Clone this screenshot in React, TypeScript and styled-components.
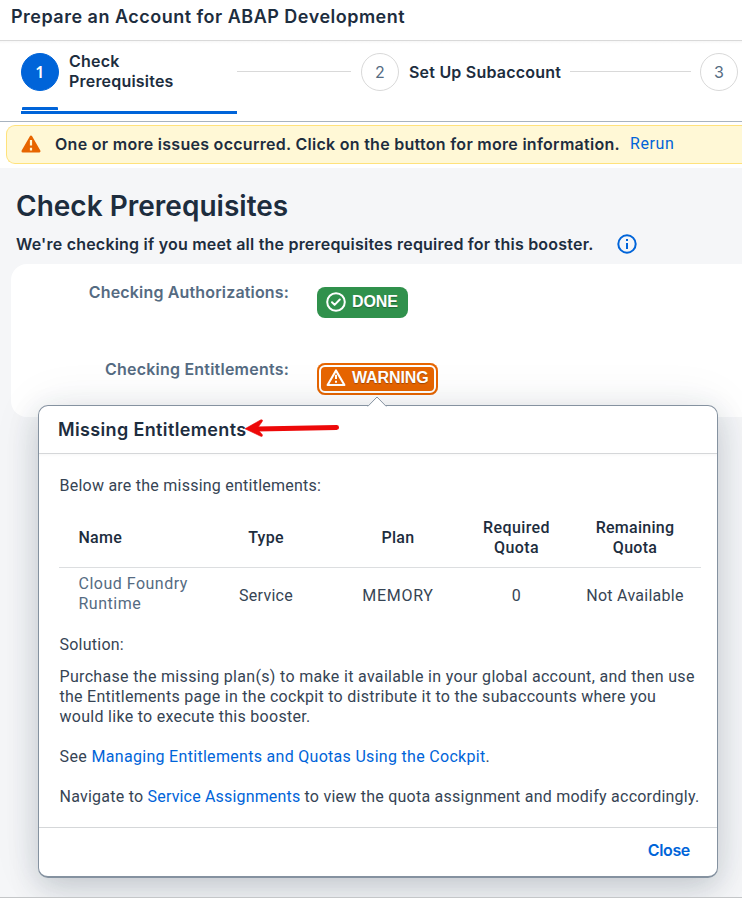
import React from "react";
import styled, { createGlobalStyle } from "styled-components";

const ink = "#1d2d3e";
const muted = "#556b82";
const blue = "#0064d9";

const GlobalStyle = createGlobalStyle`
  * { box-sizing: border-box; }
  html, body { margin: 0; padding: 0; overflow: hidden; }
  body {
    font: 400 16px/20px Roboto, sans-serif;
    letter-spacing: 0.24px;
    color: #364454;
  }
`;

const Page = styled.div`
  position: relative;
  width: 742px;
  height: 898px;
  display: flex;
  flex-direction: column;
  overflow: hidden;
  background: #f5f6f8;
  border-bottom: 1px solid #c4c6c8;
`;

const Strong = styled.span<{ $track?: number; $size?: number; $color?: string }>`
  font-family: Inter, sans-serif;
  font-weight: 600;
  font-size: ${(p) => p.$size ?? 16}px;
  letter-spacing: ${(p) => p.$track ?? 0.21}px;
  color: ${(p) => p.$color ?? ink};
  white-space: nowrap;
`;

const TitleBar = styled.header`
  flex: none;
  height: 41px;
  padding: 7px 0 0 11px;
  background: #fff;
  border-bottom: 1px solid #d9d9d9;
`;

const Steps = styled.nav`
  flex: none;
  height: 81px;
  display: flex;
  padding-left: 21px;
  background: linear-gradient(#f7f7f7, #fff 3px);
  border-bottom: 1px solid #a8b3bf;
  overflow: hidden;
`;

const Step = styled.div<{ $width: number; $active?: boolean }>`
  flex: none;
  width: ${(p) => p.$width}px;
  height: 73px;
  padding-top: 12px;
  border-bottom: 3px solid ${(p) => (p.$active ? blue : "transparent")};
`;

const StepContent = styled.div`
  display: flex;
  align-items: center;
  gap: 10px;
  height: 38px;
`;

const StepLabel = styled(Strong)<{ $lines?: number }>`
  padding-bottom: ${(p) => (p.$lines === 2 ? 2 : 0)}px;
`;

const StepNumber = styled.div<{ $active?: boolean }>`
  flex: none;
  width: 38px;
  height: 38px;
  border-radius: 50%;
  display: flex;
  align-items: center;
  justify-content: center;
  border: 1px solid ${(p) => (p.$active ? blue : "#d9d9d9")};
  background: ${(p) => (p.$active ? blue : "#fff")};
  color: ${(p) => (p.$active ? "#fff" : muted)};
  font: ${(p) => (p.$active ? 600 : 400)} 16px/20px ${(p) => (p.$active ? '"Noto Sans"' : "Inter")}, sans-serif;
`;

const StepMark = styled.div`
  width: 36px;
  height: 3px;
  margin: 16px 0 0 1px;
  background: ${blue};
  border-radius: 1px 1px 0 0;
`;

const Connector = styled.div<{ $width: number; $gap: number }>`
  flex: none;
  width: ${(p) => p.$width}px;
  height: 1px;
  margin: 30px ${(p) => p.$gap}px 0 0;
  background: #d9d9d9;
`;

const MessageArea = styled.div`
  flex: none;
  height: 46px;
  padding: 3px 0 0 6px;
  background: #fff;
`;

const MessageStrip = styled.div`
  height: 39px;
  display: flex;
  align-items: center;
  padding: 0 0 2px 14px;
  background: #fff8d6;
  border: 1px solid #ffe27c;
  border-right: 0;
  border-radius: 9px 0 0 9px;

  svg { flex: none; margin-right: 14px; }
`;

const Link = styled.a<{ $track?: number }>`
  color: ${blue};
  text-decoration: none;
  letter-spacing: ${(p) => p.$track ?? 0.24}px;
`;

const RerunLink = styled(Link)`
  margin-left: 10px;
  letter-spacing: 0.6px;
`;

const Content = styled.main`
  flex: 1;
`;

const Heading = styled.h1`
  margin: 0;
  padding: 19px 0 0 16px;
  height: 66px;
  line-height: 36px;
`;

const Subheading = styled.div`
  display: flex;
  align-items: center;
  gap: 23px;
  height: 20px;
  padding-left: 16px;

  svg { margin-bottom: 1px; }
`;

const Card = styled.section`
  margin: 10px 0 0 11px;
  height: 153px;
  padding-top: 18px;
  background: #fff;
  border-radius: 16px 0 0 16px;
`;

const CheckRow = styled.div`
  display: grid;
  grid-template-columns: 278px 1fr;
  column-gap: 28px;
  height: 77px;
`;

const CheckLabel = styled.div`
  text-align: right;
`;

const Badge = styled.button<{ $color: string; $width: number }>`
  width: ${(p) => p.$width}px;
  height: 31px;
  margin-top: 5px;
  padding: 0 0 2px 9px;
  display: flex;
  align-items: center;
  gap: 6px;
  border: 0;
  border-radius: 8px;
  background: ${(p) => p.$color};
  color: #fff;
  font: 700 16px/20px "Liberation Sans", sans-serif;
  letter-spacing: -0.1px;
  text-shadow: 0 1px 1px rgba(0, 0, 0, 0.3);
`;

const FocusedBadge = styled(Badge)`
  margin-top: 4px;
  height: 32px;
  padding-bottom: 3px;
  box-shadow: inset 0 0 0 2px ${(p) => p.$color}, inset 0 0 0 4px #fff;
`;

const Popover = styled.div`
  position: absolute;
  left: 38px;
  top: 405px;
  width: 680px;
  height: 473px;
  display: flex;
  flex-direction: column;
  background: #fff;
  border: 1px solid #8592a0;
  border-bottom-width: 2px;
  border-radius: 10px;
  box-shadow: 0 10px 30px rgba(34, 53, 72, 0.2), 0 0 50px rgba(34, 53, 72, 0.08);
`;

const PopoverArrow = styled.svg`
  position: absolute;
  left: 328px;
  top: -10px;
`;

const RedArrow = styled.svg`
  position: absolute;
  left: 244px;
  top: 417px;
`;

const PopoverHeader = styled.div`
  flex: none;
  height: 48px;
  padding: 14px 0 0 19px;
  border-bottom: 1px solid #d5d7d9;
`;

const PopoverBody = styled.div`
  flex: 1;
  padding: 22px 0 0 20px;
  border-radius: 0;
  background: linear-gradient(#f9f9f9, #fff 3px);
`;

const TableGrid = styled.div`
  width: 642px;
  display: grid;
  grid-template-columns: 141px 132px 132px 105px 132px;
  align-items: center;
  text-align: center;
`;

const TableHead = styled(TableGrid)`
  height: 61px;
  margin-top: 11px;
  padding-top: 1px;
  border-bottom: 1px solid #dcdee0;
  color: ${ink};
  font-weight: 500;
`;

const TableRow = styled(TableGrid)`
  height: 55px;
`;

const NameCell = styled.div<{ $muted?: boolean }>`
  padding: 0 0 ${(p) => (p.$muted ? 4 : 0)}px 19.5px;
  text-align: left;
  color: ${(p) => (p.$muted ? muted : "inherit")};
  letter-spacing: ${(p) => (p.$muted ? 0.5 : 0.24)}px;
`;

const Cell = styled.div<{ $track?: number }>`
  letter-spacing: ${(p) => p.$track ?? 0.26}px;
`;

const Paragraph = styled.p<{ $gap: number; $track?: number }>`
  margin: ${(p) => p.$gap}px 0 0 0.5px;
  letter-spacing: ${(p) => p.$track ?? 0.24}px;
  white-space: nowrap;
`;

const Line = styled.span<{ $track: number }>`
  display: block;
  letter-spacing: ${(p) => p.$track}px;
`;

const PopoverFooter = styled.div`
  flex: none;
  height: 49px;
  padding: 12px 27px 0 0;
  text-align: right;
  border-top: 1px solid #d5d7d9;
`;

const AlertSolid = () => (
  <svg width="20" height="18" viewBox="0 0 20 18">
    <path d="M10 1.8 18.2 16.2H1.8Z" fill="#e76500" stroke="#e76500" strokeWidth="2.6" strokeLinejoin="round" />
    <path d="M10 5v5.6M10 12.8v2.6" stroke="#fff8d6" strokeWidth="2.2" />
  </svg>
);

const AlertOutline = () => (
  <svg width="20" height="19" viewBox="0 0 20 19">
    <path d="M10 2.4 18.4 17H1.6Z" fill="none" stroke="#fff" strokeWidth="2.1" strokeLinejoin="round" />
    <path d="M10 6.8v4.2M10 12.8v2" stroke="#fff" strokeWidth="2" />
  </svg>
);

const CheckCircle = () => (
  <svg width="20" height="20" viewBox="0 0 20 20" fill="none" stroke="#fff" strokeWidth="2">
    <circle cx="10" cy="10" r="8.8" />
    <path d="m6 10.3 2.6 2.6 5.2-5.4" strokeLinecap="round" strokeLinejoin="round" />
  </svg>
);

const InfoCircle = () => (
  <svg width="20" height="20" viewBox="0 0 20 20" fill="none" stroke={blue} strokeWidth="2">
    <circle cx="10" cy="10" r="8.7" />
    <path d="M10 9v6M10 5v2" />
  </svg>
);

export default function App() {
  return (
    <>
      <GlobalStyle />
      <Page>
        <TitleBar>
          <Strong $size={18} $track={0.49}>Prepare an Account for ABAP Development</Strong>
        </TitleBar>
        <Steps>
          <Step $width={216} $active>
            <StepContent>
              <StepNumber $active>1</StepNumber>
              <StepLabel $lines={2} $track={0.2}>Check<br />Prerequisites</StepLabel>
            </StepContent>
            <StepMark />
          </Step>
          <Connector $width={114} $gap={10} />
          <Step $width={209}>
            <StepContent>
              <StepNumber>2</StepNumber>
              <StepLabel>Set Up Subaccount</StepLabel>
            </StepContent>
          </Step>
          <Connector $width={121} $gap={9} />
          <Step $width={60}>
            <StepContent><StepNumber>3</StepNumber></StepContent>
          </Step>
        </Steps>
        <MessageArea>
          <MessageStrip>
            <AlertSolid />
            <Strong $track={0.285}>One or more issues occurred. Click on the button for more information.</Strong>
            <RerunLink>Rerun</RerunLink>
          </MessageStrip>
        </MessageArea>
        <Content>
          <Heading><Strong $size={28} $track={0.01}>Check Prerequisites</Strong></Heading>
          <Subheading>
            <Strong>We're checking if you meet all the prerequisites required for this booster.</Strong>
            <InfoCircle />
          </Subheading>
          <Card>
            <CheckRow>
              <CheckLabel><Strong $track={0.16} $color={muted}>Checking Authorizations:</Strong></CheckLabel>
              <Badge $color="#30914c" $width={91}><CheckCircle />DONE</Badge>
            </CheckRow>
            <CheckRow>
              <CheckLabel><Strong $track={0.22} $color={muted}>Checking Entitlements:</Strong></CheckLabel>
              <FocusedBadge $color="#e76500" $width={121}><AlertOutline />WARNING</FocusedBadge>
            </CheckRow>
          </Card>
        </Content>
        <Popover>
          <PopoverArrow width="20" height="11" viewBox="0 0 20 11">
            <path d="M0 11 .8 10 10 1 19.2 10 20 11Z" fill="#fff" />
            <path d="M.8 10.4 10 1 19.2 10.4" fill="none" stroke="#8592a0" />
          </PopoverArrow>
          <PopoverHeader><Strong $size={18} $track={0.36}>Missing Entitlements</Strong></PopoverHeader>
          <PopoverBody>
            <Paragraph $gap={0}>Below are the missing entitlements:</Paragraph>
            <TableHead>
              <NameCell>Name</NameCell>
              <Cell>Type</Cell>
              <Cell>Plan</Cell>
              <Cell $track={0.4}>Required<br />Quota</Cell>
              <Cell>Remaining<br />Quota</Cell>
            </TableHead>
            <TableRow>
              <NameCell $muted>Cloud Foundry<br />Runtime</NameCell>
              <Cell>Service</Cell>
              <Cell $track={0.7}>MEMORY</Cell>
              <Cell>0</Cell>
              <Cell>Not Available</Cell>
            </TableRow>
            <Paragraph $gap={12}>Solution:</Paragraph>
            <Paragraph $gap={12}>
              <Line $track={0.325}>Purchase the missing plan(s) to make it available in your global account, and then use</Line>
              <Line $track={0.28}>the Entitlements page in the cockpit to distribute it to the subaccounts where you</Line>
              <Line $track={0.29}>would like to execute this booster.</Line>
            </Paragraph>
            <Paragraph $gap={20} $track={0.4}>See <Link $track={0.3}>Managing Entitlements and Quotas Using the Cockpit</Link>.</Paragraph>
            <Paragraph $gap={20}>
              Navigate to <Link $track={0.17}>Service Assignments</Link> to view the quota assignment and modify accordingly.
            </Paragraph>
          </PopoverBody>
          <PopoverFooter><Strong $track={-0.35} $color={blue}>Close</Strong></PopoverFooter>
        </Popover>
        <RedArrow width="97" height="22" viewBox="0 0 97 22">
          <path d="M13 12 92.5 10.4" stroke="#ed0909" strokeWidth="5" strokeLinecap="round" />
          <path d="M1 11.8 16.5 3Q19.5 2.2 18 4.8L13 11.8 18.2 17.4Q19 20.4 16.2 19Z" fill="#ed0909" stroke="#ed0909" strokeWidth=".6" strokeLinejoin="round" />
        </RedArrow>
      </Page>
    </>
  );
}
